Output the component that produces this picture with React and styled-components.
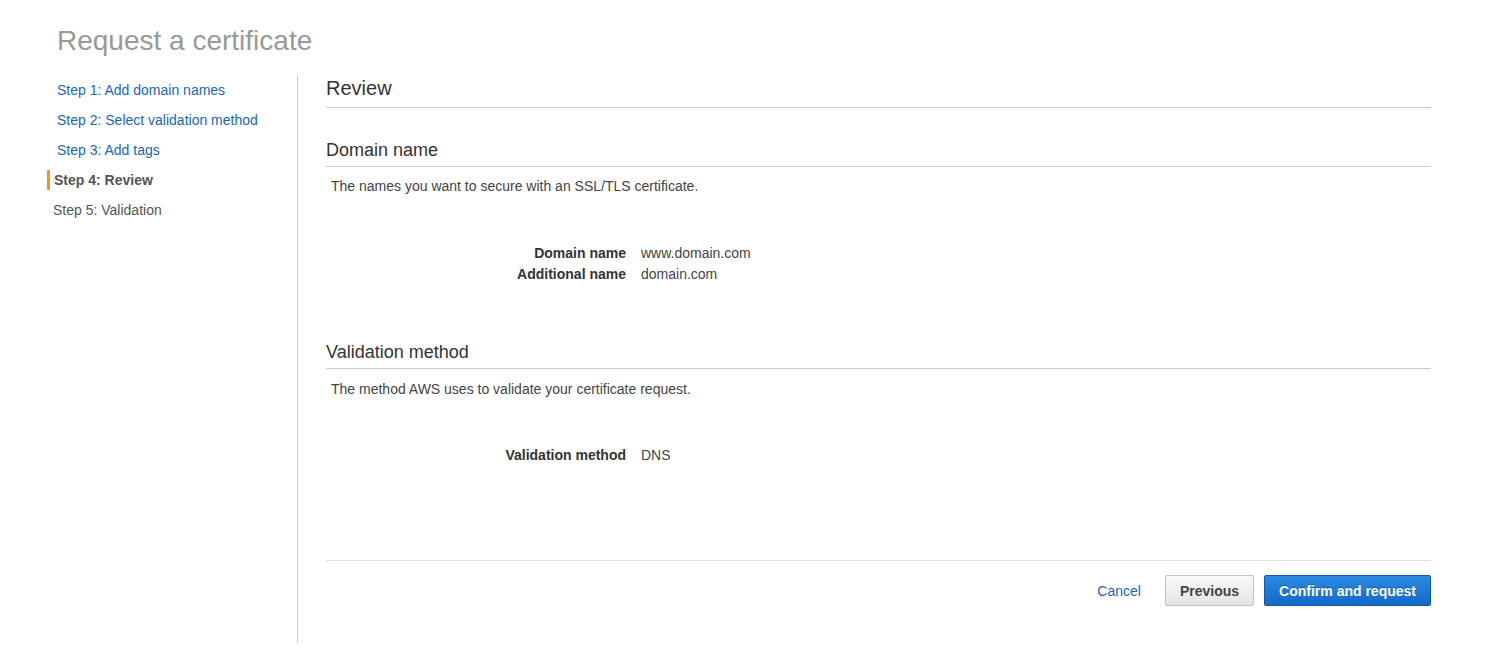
import React from 'react';
import styled, { createGlobalStyle } from 'styled-components';

const GlobalStyle = createGlobalStyle`
  body {
    margin: 0;
    background: #fff;
    font-family: "Liberation Sans", Arial, sans-serif;
    color: #444;
  }
`;

const Page = styled.div`
  padding: 0 58px 0 47px;
`;

const Title = styled.h1`
  margin: 0;
  padding: 24px 0 0 10px;
  height: 75px;
  box-sizing: border-box;
  font-size: 28px;
  line-height: 34px;
  font-weight: normal;
  color: #999;
`;

const Body = styled.div`
  display: flex;
  align-items: stretch;
`;

const Sidebar = styled.ul`
  list-style: none;
  margin: 0;
  padding: 0;
  width: 250px;
  min-height: 568px;
  border-right: 1px solid #ccc;
  flex-shrink: 0;
`;

const Step = styled.li`
  height: 30px;
  display: flex;
  align-items: center;
  font-size: 14px;
  padding-left: ${p => p.$indent}px;
`;

const StepLink = styled.a`
  color: #1a66b8;
  text-decoration: none;
  cursor: pointer;
`;

const StepActive = styled.span`
  border-left: 3px solid #f0951f;
  padding-left: 4px;
  line-height: 20px;
  font-weight: bold;
  color: #555;
`;

const StepPlain = styled.span`
  color: #555;
`;

const Main = styled.div`
  flex: 1;
  padding-left: 28px;
`;

const PageHeading = styled.h2`
  margin: 0;
  padding: 1px 0 7px;
  font-size: 20px;
  line-height: 24px;
  font-weight: normal;
  color: #333;
  border-bottom: 1px solid #ccc;
`;

const SectionHeading = styled.h3`
  margin: ${p => p.$top}px 0 0;
  padding-bottom: 5px;
  font-size: 18px;
  line-height: 22px;
  font-weight: normal;
  color: #333;
  border-bottom: 1px solid #ccc;
`;

const Description = styled.p`
  margin: ${p => p.$top}px 0 0;
  padding-left: 5px;
  font-size: 14px;
  line-height: 20px;
  color: #444;
`;

const Details = styled.dl`
  margin: ${p => p.$top}px 0 0;
  display: grid;
  grid-template-columns: 300px 1fr;
  column-gap: 15px;
  font-size: 14px;
  line-height: 21px;
`;

const Key = styled.dt`
  text-align: right;
  font-weight: bold;
  color: #333;
`;

const Value = styled.dd`
  margin: 0;
  color: #444;
`;

const Footer = styled.div`
  margin-top: 94px;
  padding-top: 14px;
  border-top: 1px solid #ddd;
  display: flex;
  justify-content: flex-end;
  align-items: center;
`;

const Cancel = styled.a`
  color: #1a66b8;
  font-size: 14px;
  margin-right: 24px;
  cursor: pointer;
`;

const Button = styled.button`
  height: 31px;
  padding: 0 14px;
  margin-left: ${p => (p.$primary ? 10 : 0)}px;
  font-family: inherit;
  font-size: 14px;
  font-weight: bold;
  border-radius: 2px;
  cursor: pointer;
  border: 1px solid ${p => (p.$primary ? '#13599f' : '#c2c2c2')};
  color: ${p => (p.$primary ? '#fff' : '#444')};
  background: ${p =>
    p.$primary
      ? 'linear-gradient(#2c8ae2, #1569c7)'
      : 'linear-gradient(#f9f9f9, #e4e4e4)'};
  text-shadow: ${p => (p.$primary ? '0 -1px 0 rgba(0,0,0,0.25)' : 'none')};
`;

export default function App() {
  return (
    <Page>
      <GlobalStyle />
      <Title>Request a certificate</Title>
      <Body>
        <Sidebar>
          <Step $indent={10}><StepLink>Step 1: Add domain names</StepLink></Step>
          <Step $indent={10}><StepLink>Step 2: Select validation method</StepLink></Step>
          <Step $indent={10}><StepLink>Step 3: Add tags</StepLink></Step>
          <Step $indent={0}><StepActive>Step 4: Review</StepActive></Step>
          <Step $indent={6}><StepPlain>Step 5: Validation</StepPlain></Step>
        </Sidebar>
        <Main>
          <PageHeading>Review</PageHeading>

          <SectionHeading $top={31}>Domain name</SectionHeading>
          <Description $top={9}>The names you want to secure with an SSL/TLS certificate.</Description>
          <Details $top={47}>
            <Key>Domain name</Key>
            <Value>www.domain.com</Value>
            <Key>Additional name</Key>
            <Value>domain.com</Value>
          </Details>

          <SectionHeading $top={56}>Validation method</SectionHeading>
          <Description $top={10}>The method AWS uses to validate your certificate request.</Description>
          <Details $top={46}>
            <Key>Validation method</Key>
            <Value>DNS</Value>
          </Details>

          <Footer>
            <Cancel>Cancel</Cancel>
            <Button>Previous</Button>
            <Button $primary>Confirm and request</Button>
          </Footer>
        </Main>
      </Body>
    </Page>
  );
}
